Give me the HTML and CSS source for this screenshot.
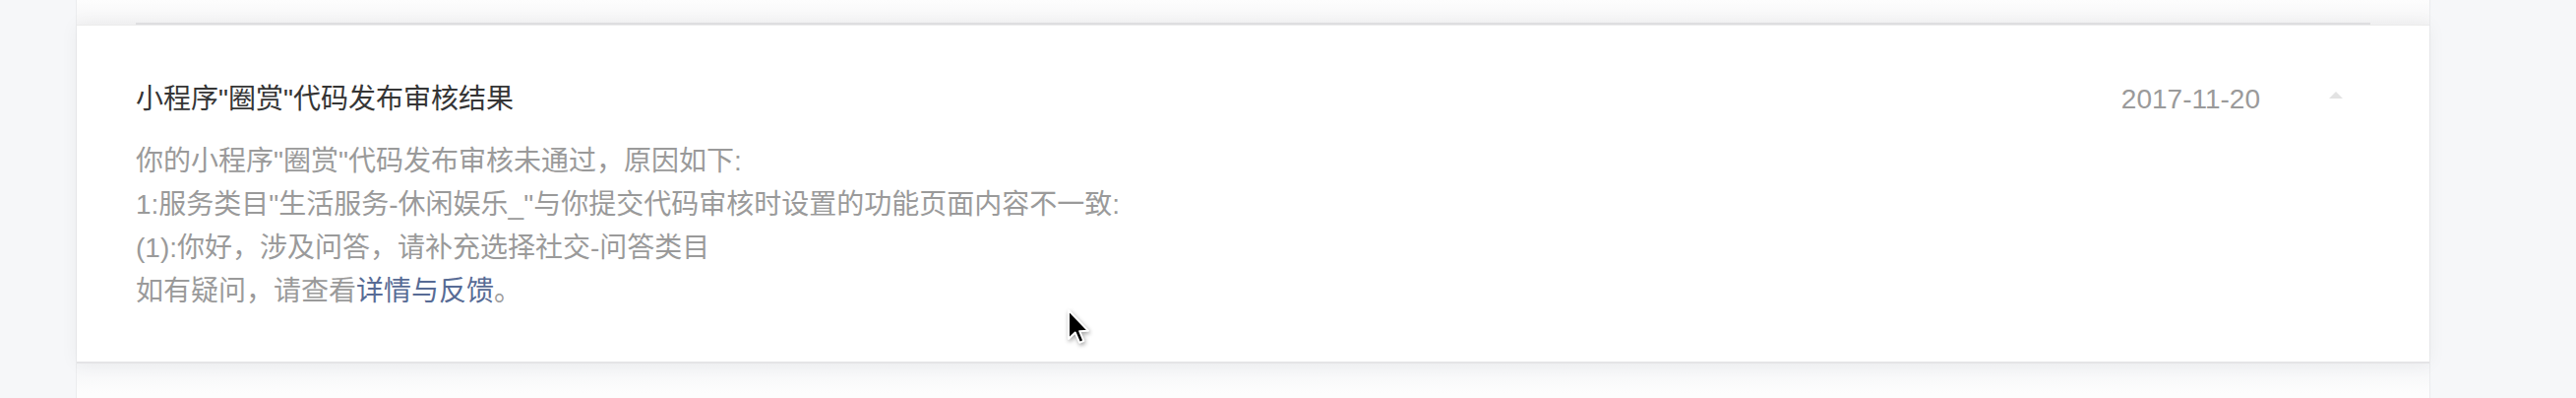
FILE: index.html
```html
<!DOCTYPE html>
<html lang="zh-CN">
<head>
<meta charset="utf-8">
<title>消息</title>
<link rel="stylesheet" href="styles.css">
</head>
<body>
<div class="wrap">
  <div class="list">
    <div class="item item-prev"></div>
    <div class="item item-open">
      <div class="item-head">
        <div class="item-title">小程序"圈赏"代码发布审核结果</div>
        <div class="item-date">2017-11-20</div>
        <span class="caret"></span>
      </div>
      <div class="item-body">
        <p>你的小程序"圈赏"代码发布审核未通过，原因如下:</p>
        <p>1:服务类目"生活服务-休闲娱乐_"与你提交代码审核时设置的功能页面内容不一致:</p>
        <p>(1):你好，涉及问答，请补充选择社交-问答类目</p>
        <p>如有疑问，请查看<a class="link" href="#">详情与反馈</a>。</p>
      </div>
    </div>
    <div class="item item-next"></div>
  </div>
</div>
<svg class="cursor" width="26" height="38" viewBox="0 0 13 19" xmlns="http://www.w3.org/2000/svg">
  <path d="M1 1 L1 15.5 L4.4 12.3 L6.6 17.4 L8.7 16.5 L6.6 11.6 L11 11.4 Z" fill="#000" stroke="#fff" stroke-width="1" stroke-linejoin="round"/>
</svg>
</body>
</html>
```
FILE: styles.css
```css
html, body {
  margin: 0;
  padding: 0;
}
body {
  background: #f6f7f9;
  font-family: "Liberation Sans", "Noto Sans CJK SC", sans-serif;
  height: 404px;
  overflow: hidden;
  position: relative;
}
.wrap {
  padding-left: 78px;
}
.list {
  width: 2391px;
  background: #fff;
  box-shadow: 0 0 0 1px #ebecee;
}
.item {
  background: #fff;
}
.item-prev {
  height: 25px;
  position: relative;
  background: linear-gradient(#fdfdfd, #f5f5f6);
}
.item-prev::after {
  content: "";
  position: absolute;
  left: 60px;
  right: 60px;
  bottom: 0;
  height: 2px;
  background: #e3e3e5;
}
.item-open {
  position: relative;
  z-index: 1;
  border-top: 1px solid #ececec;
  border-bottom: 2px solid #e4e4e6;
  padding: 53px 88px 49px 60px;
  box-shadow: 0 0 18px rgba(0, 0, 0, 0.05);
}
.item-head {
  display: flex;
  align-items: center;
  height: 44px;
}
.item-title {
  flex: 1;
  font-size: 28px;
  line-height: 44px;
  color: #353535;
}
.item-date {
  font-size: 28px;
  line-height: 44px;
  color: #9a9a9a;
  margin-right: 70px;
}
.caret {
  width: 0;
  height: 0;
  border-left: 7px solid transparent;
  border-right: 7px solid transparent;
  border-bottom: 7px solid #e3e3e3;
  margin-top: -10px;
}
.item-body {
  margin-top: 19px;
  font-size: 28px;
  line-height: 44px;
  color: #9a9a9a;
}
.item-body p {
  margin: 0;
}
.link {
  color: #576b95;
  text-decoration: none;
}
.item-next {
  height: 50px;
  background: linear-gradient(#f4f5f7, #fdfdfd 30px);
}
.cursor {
  position: absolute;
  left: 1084px;
  top: 313px;
  z-index: 5;
  filter: drop-shadow(1px 2px 2px rgba(0,0,0,0.35));
}
```
